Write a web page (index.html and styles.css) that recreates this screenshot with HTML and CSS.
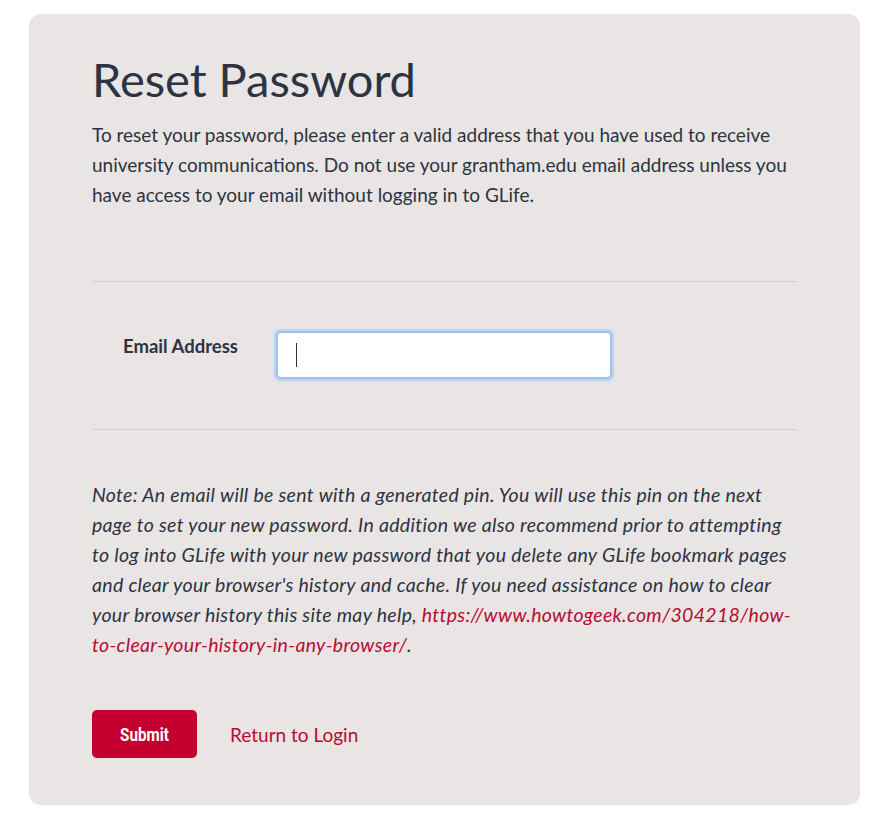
FILE: index.html
```html
<!DOCTYPE html>
<html lang="en">
<head>
  <meta charset="UTF-8">
  <meta name="viewport" content="width=device-width, initial-scale=1.0">
  <title>Reset Password</title>
  <link rel="stylesheet" href="styles.css">
</head>
<body>
  <!-- reset card -->
  <div class="reset-card">
    <h1>Reset Password</h1>
    <p class="intro">To reset your password, please enter a valid address that you have used to receive university communications. Do not use your grantham.edu email address unless you have access to your email without logging in to GLife.</p>

    <div class="form-row">
      <label for="email">Email Address</label>
      <div class="input-wrap">
        <input type="text" id="email" class="email-input">
        <span class="caret"></span>
      </div>
    </div>

    <p class="note">Note: An email will be sent with a generated pin. You will use this pin on the next page to set your new password. In addition we also recommend prior to attempting to log into GLife with your new password that you delete any GLife bookmark pages and clear your browser's history and cache. If you need assistance on how to clear your browser history this site may help, <a href="#">https://www.howtogeek.com/304218/how-to-clear-your-history-in-any-browser/</a>.</p>

    <div class="actions">
      <button type="button" class="submit-btn"><span>Submit</span></button>
      <a href="#" class="return-link">Return to Login</a>
    </div>
  </div>
</body>
</html>
```

FILE: styles.css
```css
body {
  margin: 0;
  background: #fff;
  font-family: 'Lato', sans-serif;
  color: #2d3340;
}

.reset-card {
  width: 705px;
  margin: 14px 0 0 29px;
  padding: 30px 63px 47px;
  background: #e8e5e4;
  border-radius: 12px;
}

h1 {
  margin: 0 0 6px;
  font-size: 47px;
  font-weight: 400;
  line-height: 70px;
  color: #2c3342;
}

.intro {
  margin: 0;
  padding-bottom: 71px;
  font-size: 19px;
  line-height: 30px;
  border-bottom: 1px solid #d3cfcd;
}

.form-row {
  display: flex;
  align-items: flex-start;
  padding: 47px 0 48px;
  border-bottom: 1px solid #d3cfcd;
}

.form-row label {
  width: 151px;
  padding: 6px 0 0 31px;
  font-size: 18.5px;
  font-weight: 700;
}

.input-wrap {
  position: relative;
}

.email-input {
  display: block;
  width: 336px;
  height: 48px;
  box-sizing: border-box;
  margin: 2px;
  border: 2px solid #9fc2ea;
  border-radius: 5px;
  background: #fff;
  box-shadow: 0 0 0 2px #bcd4f0, 0 0 3px 2px #cfdff2;
  outline: none;
}

.caret {
  position: absolute;
  left: 22px;
  top: 14px;
  width: 1px;
  height: 24px;
  background: #333;
}

.note {
  margin: 50px 0 0;
  font-size: 19.5px;
  line-height: 30px;
  font-style: italic;
  letter-spacing: 0.3px;
}

.note a {
  color: #b80c33;
  text-decoration: none;
}

.actions {
  display: flex;
  align-items: center;
  gap: 33px;
  margin-top: 50px;
}

.submit-btn {
  width: 105px;
  height: 48px;
  border: none;
  border-radius: 5px;
  background: #c4002f;
  color: #fff;
  font-family: 'Roboto', sans-serif;
  font-size: 19px;
  font-weight: 700;
  cursor: pointer;
}

.submit-btn span {
  display: inline-block;
  transform: scaleX(0.8);
}

.return-link {
  color: #b80c33;
  font-size: 19px;
  text-decoration: none;
}
```
